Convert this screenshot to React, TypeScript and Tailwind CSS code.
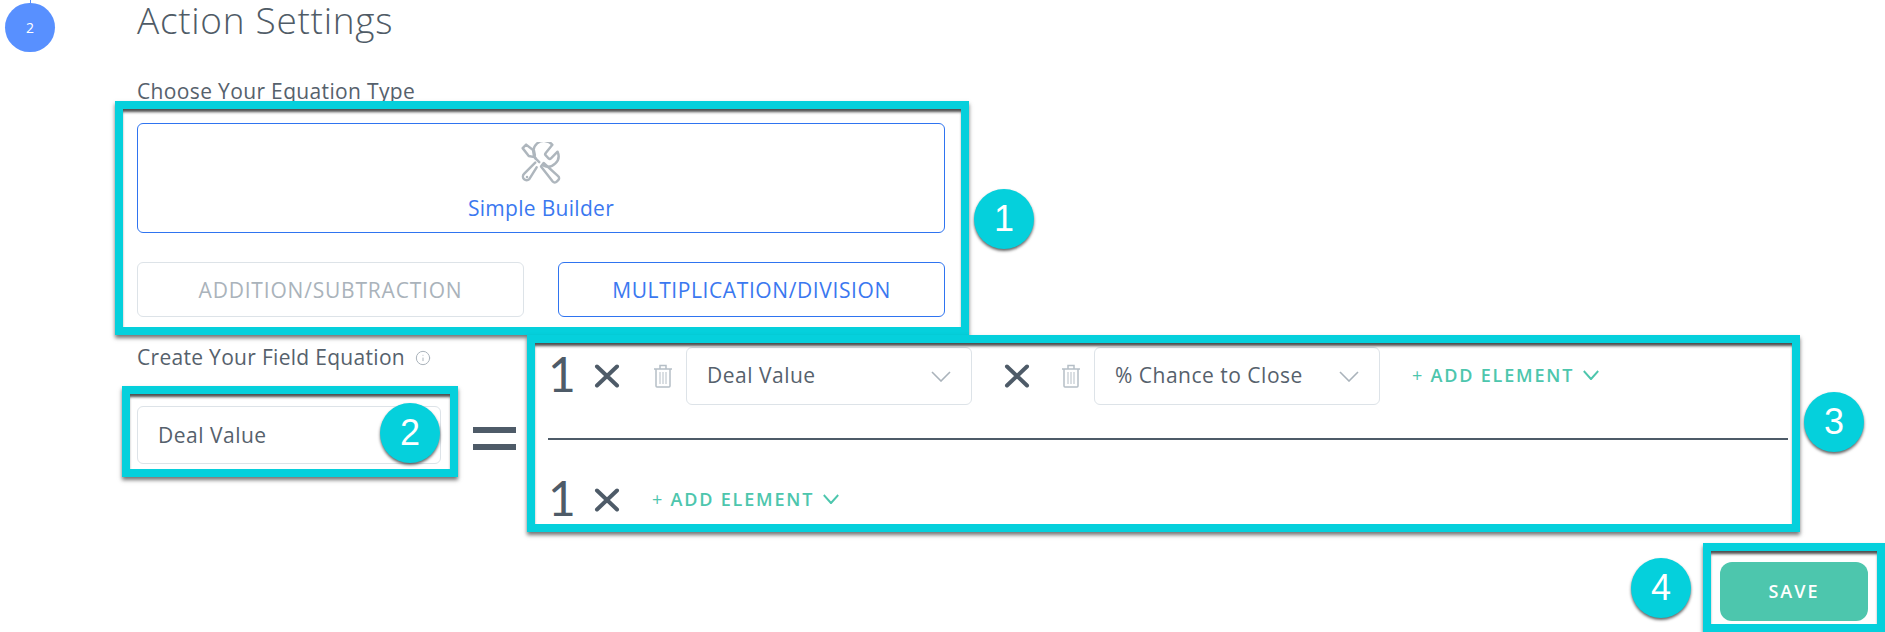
import { Info } from "lucide-react";

const fontStack = "font-['Open_Sans','Liberation_Sans',sans-serif]";

const ToolsIcon = () => (
  <svg width="42" height="42" viewBox="0 0 24 24" fill="none" stroke="#aeb6bd" strokeWidth="1.4" strokeLinejoin="round" strokeLinecap="round">
    <path d="M1.5 3.5 3.5 1.5 8 5l.5 2.5-1 1L5 8z" />
    <path d="M8 8.5 11 11.5" />
    <path d="M13.5 12 21.8 19.5a1.5 1.5 0 0 1 0 2.3l-.8.8a1.5 1.5 0 0 1-2.3 0L12 14z" />
    <path d="M14.7 6.3a1 1 0 0 0 0 1.4l1.6 1.6a1 1 0 0 0 1.4 0l3.77-3.77a6 6 0 0 1-7.94 7.94M9.5 14.5l-4.2 6.7a2.12 2.12 0 0 1-3-3l6.4-6.4M9 9.5a6 6 0 0 1 9.5-7.9l-3.8 4.7" />
    <path d="M4 20h.01" />
  </svg>
);

const TrashIcon = () => (
  <svg width="22" height="24" viewBox="0 0 22 24" fill="none" stroke="#b5bec6" strokeWidth="1.5">
    <path d="M2 5h18" />
    <path d="M8 5V1.5h6V5" />
    <path d="M4 5v17a1 1 0 0 0 1 1h12a1 1 0 0 0 1-1V5" />
    <path d="M8 8v12M11 8v12M14 8v12" strokeWidth="1" />
  </svg>
);

const Times = () => (
  <svg width="26" height="24" viewBox="0 0 26 24" fill="none" stroke="#4e5b68" strokeWidth="4" strokeLinecap="round">
    <path d="M3 2.5 23 21.5M23 2.5 3 21.5" />
  </svg>
);

const Chevron = ({ color, w, h, sw }: { color: string; w: number; h: number; sw: number }) => (
  <svg width={w} height={h} viewBox="0 0 20 11" fill="none" stroke={color} strokeWidth={sw} preserveAspectRatio="none">
    <path d="M1 1 10 10 19 1" />
  </svg>
);

const FieldSelect = ({ label }: { label: string }) => (
  <div className="flex items-center justify-between w-[286px] h-[58px] pl-[20px] pr-[20px] bg-white border-[1.5px] border-[#dde3e8] rounded-[6px] text-[21px] tracking-[0.5px] text-[#56616c]">
    <span>{label}</span>
    <Chevron color="#aab3bb" w={20} h={11} sw={1.6} />
  </div>
);

const AddElement = () => (
  <div className="flex items-center gap-[9px] -mt-[2px] text-[#4dc6ad] text-[18px] font-semibold tracking-[1.8px]">
    <span><span className="font-normal">+</span> ADD ELEMENT</span>
    <Chevron color="#4dc6ad" w={16} h={10} sw={2.4} />
  </div>
);

const BigOne = () => (
  <span className="w-[46px] shrink-0 -mt-[4px] text-[48px] leading-none font-normal text-[#4e5b68] font-['Lato',sans-serif]">1</span>
);

const annotationBox = "absolute border-[8px] border-[#05d0dc] shadow-[0_3px_4px_rgba(0,0,0,0.55),inset_0_4px_3px_-1px_rgba(0,0,0,0.7)]";
const badge = "absolute flex items-center justify-center w-[60px] h-[60px] rounded-full bg-[#05d0dc] text-white text-[36px] font-['Liberation_Sans',sans-serif] shadow-[0_2px_3px_rgba(0,0,0,0.6)]";

export default function App() {
  return (
    <div className={`relative flex w-[1885px] h-[632px] overflow-hidden bg-white ${fontStack}`}>
      {/* step rail */}
      <div className="relative w-[137px] shrink-0">
        <div className="absolute left-[30px] top-0 w-px h-[4px] bg-[#5890ff]" />
        <div className="flex items-center justify-center w-[50px] h-[49px] ml-[5px] mt-[3px] rounded-full bg-[#5890ff] text-white text-[14px]">
          2
        </div>
      </div>

      <div className="flex-1 flex flex-col">
        <h1 className="h-[46px] text-[37px] leading-[40px] font-light tracking-[0.7px] text-[#4f5b66]">Action Settings</h1>
        <p className="mt-[33px] h-[24px] text-[21px] leading-[24px] tracking-[0.35px] text-[#56616c]">Choose Your Equation Type</p>

        <div className="mt-[20px] w-[808px] h-[110px] flex flex-col items-center pt-[18px] border border-[#2f74f0] rounded-[6px]">
          <ToolsIcon />
          <span className="mt-[12px] text-[21px] leading-[24px] tracking-[0.3px] text-[#3b78f0]">Simple Builder</span>
        </div>

        <div className="mt-[29px] w-[808px] grid grid-cols-2 gap-[34px] text-[21px]">
          <button className="h-[55px] pt-[3px] border-[1.5px] border-[#dde3e8] rounded-[6px] tracking-[0.8px] text-[#aab3bb]">ADDITION/SUBTRACTION</button>
          <button className="h-[55px] pt-[3px] border-[1.5px] border-[#2f74f0] rounded-[6px] tracking-[0.6px] text-[#3b78f0]">MULTIPLICATION/DIVISION</button>
        </div>

        <div className="mt-[29px] h-[179px] flex items-start">
          <div className="w-[304px] shrink-0">
            <div className="flex items-center gap-[10px] h-[24px] text-[21px] tracking-[0.3px] text-[#56616c]">
              Create Your Field Equation
              <Info size={16} strokeWidth={1.5} className="text-[#aab3bb]" />
            </div>
            <div className="mt-[36px] h-[58px] flex items-center pl-[20px] pt-[1px] border-[1.5px] border-[#dde3e8] rounded-[6px] text-[21px] tracking-[0.5px] text-[#56616c]">
              Deal Value
            </div>
          </div>

          <div className="ml-[32px] mt-[81px] w-[43px] flex flex-col gap-[11px]">
            <div className="h-[6px] bg-[#4e5b68]" />
            <div className="h-[6px] bg-[#4e5b68]" />
          </div>

          <div className="ml-[32px] w-[1240px] mt-[1px]">
            <div className="flex items-center h-[58px]">
              <BigOne />
              <Times />
              <div className="ml-[32px]"><TrashIcon /></div>
              <div className="ml-[12px]"><FieldSelect label="Deal Value" /></div>
              <div className="ml-[32px]"><Times /></div>
              <div className="ml-[30px]"><TrashIcon /></div>
              <div className="ml-[12px]"><FieldSelect label="% Chance to Close" /></div>
              <div className="ml-[32px]"><AddElement /></div>
            </div>
            <div className="mt-[33px] h-[2px] bg-[#4e5b68]" />
            <div className="mt-[35px] flex items-center h-[50px]">
              <BigOne />
              <Times />
              <div className="ml-[32px]"><AddElement /></div>
            </div>
          </div>
        </div>

        <div className="mt-[37px] flex justify-end pr-[17px]">
          <button className="w-[148px] h-[59px] rounded-[12px] bg-[#4dc6ad] text-white text-[18px] font-semibold tracking-[2px]">SAVE</button>
        </div>
      </div>

      {/* annotation overlay */}
      <div className={`${annotationBox} left-[115px] top-[101px] w-[854px] h-[234px]`} />
      <div className={`${annotationBox} left-[122px] top-[386px] w-[336px] h-[91px]`} />
      <div className={`${annotationBox} left-[527px] top-[335px] w-[1273px] h-[197px]`} />
      <div className={`${annotationBox} left-[1703px] top-[543px] w-[182px] h-[89px]`} />
      <div className={`${badge} left-[974px] top-[189px]`}>1</div>
      <div className={`${badge} left-[380px] top-[403px]`}>2</div>
      <div className={`${badge} left-[1804px] top-[392px]`}>3</div>
      <div className={`${badge} left-[1631px] top-[558px]`}>4</div>
    </div>
  );
}
